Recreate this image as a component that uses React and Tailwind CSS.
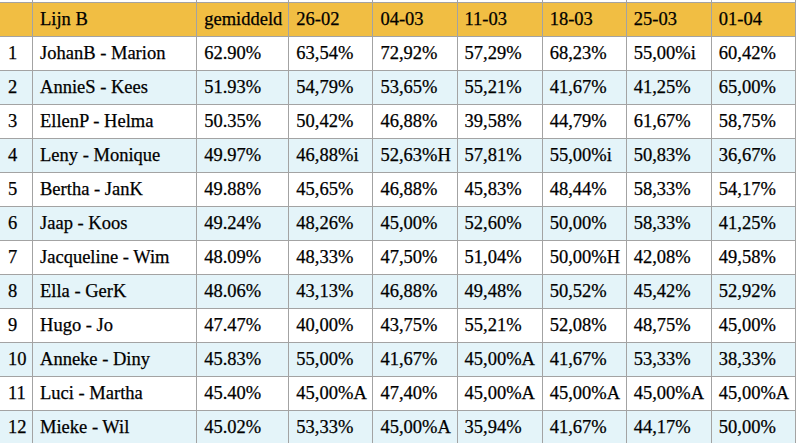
import React from "react";

const cols = [33, 164, 92, 84, 84, 85, 84, 85, 84];
const header = ["", "Lijn B", "gemiddeld", "26-02", "04-03", "11-03", "18-03", "25-03", "01-04"];
const rows = [
  ["1", "JohanB - Marion", "62.90%", "63,54%", "72,92%", "57,29%", "68,23%", "55,00%i", "60,42%"],
  ["2", "AnnieS - Kees", "51.93%", "54,79%", "53,65%", "55,21%", "41,67%", "41,25%", "65,00%"],
  ["3", "EllenP - Helma", "50.35%", "50,42%", "46,88%", "39,58%", "44,79%", "61,67%", "58,75%"],
  ["4", "Leny - Monique", "49.97%", "46,88%i", "52,63%H", "57,81%", "55,00%i", "50,83%", "36,67%"],
  ["5", "Bertha - JanK", "49.88%", "45,65%", "46,88%", "45,83%", "48,44%", "58,33%", "54,17%"],
  ["6", "Jaap - Koos", "49.24%", "48,26%", "45,00%", "52,60%", "50,00%", "58,33%", "41,25%"],
  ["7", "Jacqueline - Wim", "48.09%", "48,33%", "47,50%", "51,04%", "50,00%H", "42,08%", "49,58%"],
  ["8", "Ella - GerK", "48.06%", "43,13%", "46,88%", "49,48%", "50,52%", "45,42%", "52,92%"],
  ["9", "Hugo - Jo", "47.47%", "40,00%", "43,75%", "55,21%", "52,08%", "48,75%", "45,00%"],
  ["10", "Anneke - Diny", "45.83%", "55,00%", "41,67%", "45,00%A", "41,67%", "53,33%", "38,33%"],
  ["11", "Luci - Martha", "45.40%", "45,00%A", "47,40%", "45,00%A", "45,00%A", "45,00%A", "45,00%A"],
  ["12", "Mieke - Wil", "45.02%", "53,33%", "45,00%A", "35,94%", "41,67%", "44,17%", "50,00%"],
];

export default function App() {
  return (
    <div className="w-[799px] h-[443px] overflow-hidden bg-white">
      <table
        className="table-fixed border-collapse -mt-[32px] -ml-[1px] text-black text-[18.5px] leading-none [-webkit-text-stroke:0.25px_#000]"
        style={{ fontFamily: '"Liberation Serif", "Times New Roman", serif', width: 797 }}
      >
        <colgroup>
          {cols.map((w, i) => (
            <col key={i} style={{ width: w }} />
          ))}
        </colgroup>
        <tbody>
          <tr className="bg-white">
            {cols.map((_, i) => (
              <td key={i} className="h-[34px] border border-[#a3a3a3] p-0"></td>
            ))}
          </tr>
          <tr className="bg-[#f1be43]">
            {header.map((h, i) => (
              <td key={i} className="h-[34px] border border-[#a3a3a3] pl-[7px] pr-0 py-0 whitespace-nowrap overflow-hidden">
                {h}
              </td>
            ))}
          </tr>
          {rows.map((r, ri) => (
            <tr key={ri} className={ri % 2 === 0 ? "bg-white" : "bg-[#e4f4f9]"}>
              {r.map((c, ci) => (
                <td
                  key={ci}
                  className={`h-[34px] border border-[#a3a3a3] py-0 pr-0 whitespace-nowrap overflow-hidden ${ci === 0 ? "pl-[8px]" : "pl-[7px]"}`}
                >
                  {c}
                </td>
              ))}
            </tr>
          ))}
        </tbody>
      </table>
    </div>
  );
}
